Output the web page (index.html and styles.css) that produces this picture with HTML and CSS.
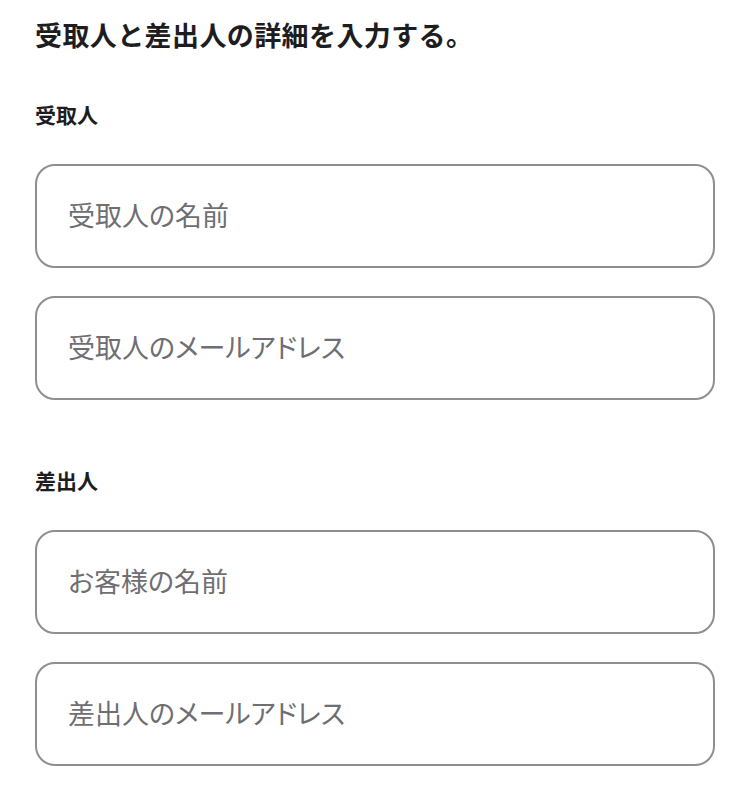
FILE: index.html
```html
<!DOCTYPE html>
<html lang="ja">
<head>
<meta charset="utf-8">
<title>受取人と差出人の詳細</title>
<link rel="stylesheet" href="styles.css">
</head>
<body>
<main class="page">
  <h1 class="title">受取人と差出人の詳細を入力する。</h1>
  <section class="group group-first">
    <h2 class="group-label">受取人</h2>
    <input class="field" type="text" placeholder="受取人の名前">
    <input class="field" type="email" placeholder="受取人のメールアドレス">
  </section>
  <section class="group group-second">
    <h2 class="group-label">差出人</h2>
    <input class="field" type="text" placeholder="お客様の名前">
    <input class="field" type="email" placeholder="差出人のメールアドレス">
  </section>
</main>
</body>
</html>
```
FILE: styles.css
```css
html, body {
  margin: 0;
  padding: 0;
  background: #ffffff;
}
body {
  font-family: "Noto Sans CJK JP", "Noto Sans", sans-serif;
  color: #1d1d1f;
}
.page {
  display: flex;
  flex-direction: column;
  padding: 16px 41px 0 35px;
}
.title {
  margin: 0;
  font-size: 27px;
  line-height: 38px;
  font-weight: 700;
  letter-spacing: 0.4px;
  color: #1d1d1f;
}
.group {
  display: flex;
  flex-direction: column;
  gap: 28px;
}
.group-first {
  margin-top: 46px;
}
.group-second {
  margin-top: 66px;
}
.group-label {
  margin: 0 0 7px;
  font-size: 21px;
  line-height: 29px;
  font-weight: 700;
  color: #1d1d1f;
}
.field {
  display: block;
  box-sizing: border-box;
  width: 100%;
  height: 104px;
  margin: 0;
  padding: 0 31px 4px;
  border: 2px solid #8e8e93;
  border-radius: 20px;
  background: #ffffff;
  font-family: "Noto Sans CJK JP", "Noto Sans", sans-serif;
  font-size: 27px;
  font-feature-settings: "palt";
  color: #1d1d1f;
  outline: none;
}
.field::placeholder {
  color: #6e6e73;
  opacity: 1;
}
```
